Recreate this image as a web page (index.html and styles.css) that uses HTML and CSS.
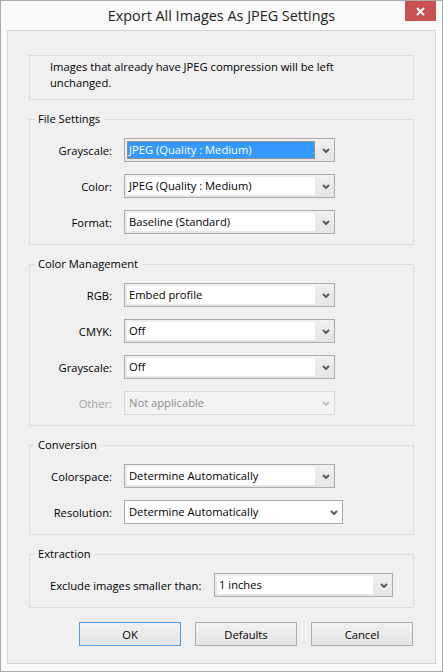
FILE: index.html
```html
<!DOCTYPE html>
<html lang="en">
<head>
  <meta charset="UTF-8">
  <meta name="viewport" content="width=device-width, initial-scale=1.0">
  <title>Export All Images As JPEG Settings</title>
  <link rel="stylesheet" href="styles.css">
</head>
<body>

  <div class="window">

    <div class="titlebar">
      <span></span>
      <span class="title">Export All Images As JPEG Settings</span>
      <button class="close" aria-label="Close">
        <svg width="9" height="9" viewBox="0 0 9 9"><path d="M1 1L8 8M8 1L1 8" stroke="#fff" stroke-width="2"/></svg>
      </button>
    </div>

    <div class="client">

      <div class="note">
        Images that already have JPEG compression will be left<br>unchanged.
      </div>

      <!-- File Settings -->
      <fieldset class="group">
        <legend>File Settings</legend>
        <div class="row">
          <span class="label">Grayscale:</span>
          <div class="combo">
            <span class="field selected">JPEG (Quality : Medium)</span>
            <span class="arrow"><svg width="8" height="5" viewBox="0 0 8 5"><path d="M1 1L4 4L7 1" fill="none" stroke="#595959" stroke-width="2"/></svg></span>
          </div>
        </div>
        <div class="row">
          <span class="label">Color:</span>
          <div class="combo">
            <span class="field">JPEG (Quality : Medium)</span>
            <span class="arrow"><svg width="8" height="5" viewBox="0 0 8 5"><path d="M1 1L4 4L7 1" fill="none" stroke="#595959" stroke-width="2"/></svg></span>
          </div>
        </div>
        <div class="row">
          <span class="label">Format:</span>
          <div class="combo">
            <span class="field">Baseline (Standard)</span>
            <span class="arrow"><svg width="8" height="5" viewBox="0 0 8 5"><path d="M1 1L4 4L7 1" fill="none" stroke="#595959" stroke-width="2"/></svg></span>
          </div>
        </div>
      </fieldset>

      <!-- Color Management -->
      <fieldset class="group">
        <legend>Color Management</legend>
        <div class="row">
          <span class="label">RGB:</span>
          <div class="combo">
            <span class="field">Embed profile</span>
            <span class="arrow"><svg width="8" height="5" viewBox="0 0 8 5"><path d="M1 1L4 4L7 1" fill="none" stroke="#595959" stroke-width="2"/></svg></span>
          </div>
        </div>
        <div class="row">
          <span class="label">CMYK:</span>
          <div class="combo">
            <span class="field">Off</span>
            <span class="arrow"><svg width="8" height="5" viewBox="0 0 8 5"><path d="M1 1L4 4L7 1" fill="none" stroke="#595959" stroke-width="2"/></svg></span>
          </div>
        </div>
        <div class="row">
          <span class="label">Grayscale:</span>
          <div class="combo">
            <span class="field">Off</span>
            <span class="arrow"><svg width="8" height="5" viewBox="0 0 8 5"><path d="M1 1L4 4L7 1" fill="none" stroke="#595959" stroke-width="2"/></svg></span>
          </div>
        </div>
        <div class="row disabled">
          <span class="label">Other:</span>
          <div class="combo">
            <span class="field">Not applicable</span>
            <span class="arrow"><svg width="8" height="5" viewBox="0 0 8 5"><path d="M1 1L4 4L7 1" fill="none" stroke="#c4c4c4" stroke-width="2"/></svg></span>
          </div>
        </div>
      </fieldset>

      <!-- Conversion -->
      <fieldset class="group">
        <legend>Conversion</legend>
        <div class="row">
          <span class="label">Colorspace:</span>
          <div class="combo">
            <span class="field">Determine Automatically</span>
            <span class="arrow"><svg width="8" height="5" viewBox="0 0 8 5"><path d="M1 1L4 4L7 1" fill="none" stroke="#595959" stroke-width="2"/></svg></span>
          </div>
        </div>
        <div class="row">
          <span class="label">Resolution:</span>
          <div class="combo flat">
            <span class="field">Determine Automatically</span>
            <span class="arrow"><svg width="8" height="5" viewBox="0 0 8 5"><path d="M1 1L4 4L7 1" fill="none" stroke="#595959" stroke-width="2"/></svg></span>
          </div>
        </div>
      </fieldset>

      <!-- Extraction -->
      <fieldset class="group">
        <legend>Extraction</legend>
        <div class="row">
          <span class="label long">Exclude images smaller than:</span>
          <div class="combo short">
            <span class="field">1 inches</span>
            <span class="arrow"><svg width="8" height="5" viewBox="0 0 8 5"><path d="M1 1L4 4L7 1" fill="none" stroke="#595959" stroke-width="2"/></svg></span>
          </div>
        </div>
      </fieldset>

      <div class="buttons">
        <button class="btn default">OK</button>
        <button class="btn">Defaults</button>
        <button class="btn">Cancel</button>
      </div>

    </div>
  </div>

</body>
</html>
```

FILE: styles.css
```css
* {
  box-sizing: border-box;
}

body {
  margin: 0;
  padding: 0;
  font-family: "Open Sans", "Noto Sans", sans-serif;
  font-size: 11.2px;
  color: #000;
  background-color: #fff;
}

.window {
  width: 443px;
  height: 672px;
  border: 1px solid #ababab;
  background-color: #fafafa;
  padding: 0 6px 7px 6px;
  display: flex;
  flex-direction: column;
}

.titlebar {
  height: 29px;
  margin: 0 -6px;
  display: grid;
  grid-template-columns: 1fr auto 1fr;
  align-items: start;
}

.title {
  font-size: 14.4px;
  color: #222;
  line-height: 29px;
  white-space: nowrap;
}

.close {
  justify-self: end;
  width: 31px;
  height: 20px;
  margin-right: 6px;
  border: none;
  padding: 0;
  background-color: #c75050;
  display: flex;
  align-items: center;
  justify-content: center;
}

.client {
  flex: 1;
  border: 1px solid #d4d4d4;
  background-color: #f0f0f0;
  padding: 24px 21px 0 21px;
  display: flex;
  flex-direction: column;
  gap: 11px;
}

.note {
  border: 1px solid #dcdcdc;
  height: 45px;
  padding: 3px 20px 0 20px;
  line-height: 16px;
}

.group {
  margin: 0;
  min-width: 0;
  border: 1px solid #dcdcdc;
  padding: 11px 0 10px 0;
  display: flex;
  flex-direction: column;
  gap: 12px;
}

.group legend {
  margin-left: 4px;
  padding: 0 4px;
  line-height: 16px;
}

.row {
  display: flex;
  align-items: center;
  gap: 12px;
}

.label {
  width: 82px;
  text-align: right;
  white-space: nowrap;
}

.label.long {
  width: 152px;
  margin-left: 20px;
  text-align: left;
}

.combo {
  width: 211px;
  height: 24px;
  border: 1px solid #acacac;
  padding: 2px;
  background: linear-gradient(#f0f0f0, #e5e5e5);
  display: flex;
}

.combo.short {
  width: 179px;
}

.combo.flat {
  width: 219px;
  background: #fff;
}

.field {
  flex: 1;
  background-color: #fff;
  padding-left: 2px;
  line-height: 18px;
  white-space: nowrap;
}

.field.selected {
  background-color: #3399ff;
  color: #fff;
  border: 1px dotted #e8892a;
  padding-left: 1px;
  line-height: 16px;
}

.arrow {
  width: 17px;
  display: flex;
  align-items: center;
  justify-content: flex-end;
  padding-right: 2px;
}

.disabled .label {
  color: #a3a3a3;
}

.disabled .combo {
  border-color: #d9d9d9;
  background: #f3f3f3;
}

.disabled .field {
  background: none;
  color: #8d8d8d;
}

.buttons {
  margin-top: 3px;
  margin-right: 1px;
  display: flex;
  justify-content: flex-end;
  gap: 14px;
}

.btn {
  width: 102px;
  height: 24px;
  border: 1px solid #acacac;
  background: linear-gradient(#f0f0f0, #e5e5e5);
  font-family: inherit;
  font-size: 11.2px;
  color: #000;
  padding: 0;
}

.btn.default {
  border-color: #4f9ee3;
}
```
